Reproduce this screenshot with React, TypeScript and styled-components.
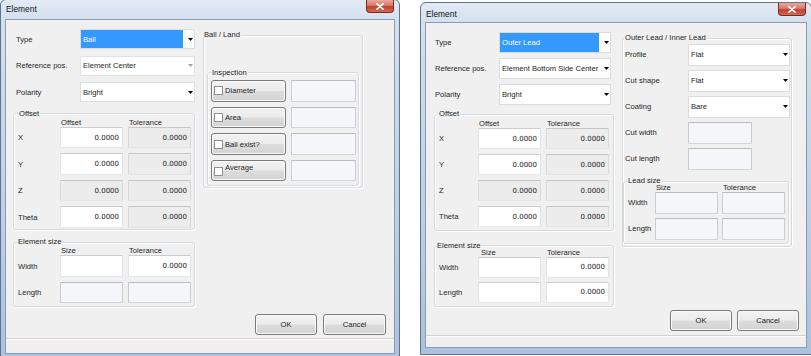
import styled, { createGlobalStyle } from "styled-components";

const GlobalStyle = createGlobalStyle`
  html, body {
    margin: 0;
    padding: 0;
    background: #ffffff;
  }
  body {
    font-family: "Liberation Sans", Arial, sans-serif;
    font-size: 7.6px;
    color: #1e1e1e;
  }
`;

const Page = styled.div`
  width: 811px;
  height: 356px;
  overflow: hidden;
  display: flex;
  align-items: flex-start;
  background: #ffffff;
`;

const Frame = styled.div<{ $left: number; $top: number; $width: number }>`
  flex: none;
  box-sizing: border-box;
  width: ${(p) => p.$width}px;
  margin-left: ${(p) => p.$left}px;
  margin-top: ${(p) => p.$top}px;
  padding: 0 4px 6px 4px;
  border: 1px solid #5f738f;
  border-radius: 6px 6px 0 0;
  background: linear-gradient(180deg, #e3ebf4 0px, #d3e0ee 19px, #bcd0e7 60%, #a9c2df 100%);
`;

const TitleBar = styled.div`
  height: 19px;
  display: flex;
  align-items: flex-start;
`;

const Title = styled.span<{ $pt: number }>`
  padding: ${(p) => p.$pt}px 0 0 1px;
  font-size: 8.4px;
  line-height: 10px;
  color: #111;
`;

const CloseButton = styled.div`
  margin-left: auto;
  margin-right: 1px;
  width: 28px;
  height: 13px;
  box-sizing: border-box;
  border: 1px solid #7c2a22;
  border-top: none;
  border-radius: 0 0 4px 4px;
  background: linear-gradient(180deg, #e9a99d 0%, #d77a6c 45%, #c4402f 55%, #d5694f 100%);
  display: flex;
  align-items: center;
  justify-content: center;
`;

const Client = styled.div<{ $height: number }>`
  box-sizing: border-box;
  height: ${(p) => p.$height}px;
  display: flex;
  flex-direction: column;
  background: #f0f0f0;
  border: 1px solid #8a9cb4;
`;

const Body = styled.div<{ $cols: string; $pad: string }>`
  display: grid;
  grid-template-columns: ${(p) => p.$cols};
  column-gap: 8px;
  align-items: start;
  padding: ${(p) => p.$pad};
`;

const Column = styled.div`
  display: flex;
  flex-direction: column;
`;

const FormGrid = styled.div<{ $label: number; $field: number; $row: number; $gap: number; $indent: number }>`
  display: grid;
  grid-template-columns: ${(p) => p.$label}px ${(p) => p.$field}px;
  grid-auto-rows: ${(p) => p.$row}px;
  row-gap: ${(p) => p.$gap}px;
  align-items: center;
  padding-left: ${(p) => p.$indent}px;
`;

const Label = styled.span`
  white-space: nowrap;
`;

const GroupBox = styled.div<{ $mt: number; $pad: string }>`
  position: relative;
  margin-top: ${(p) => p.$mt}px;
  padding: ${(p) => p.$pad};
  border: 1px solid #d5dadf;
  border-radius: 3px;
  box-shadow: inset 1px 1px 0 #ffffff, 1px 1px 0 #ffffff;
`;

const Caption = styled.span<{ $left: number }>`
  position: absolute;
  top: -4.5px;
  left: ${(p) => p.$left}px;
  padding: 0 1px;
  line-height: 7px;
  background: #f0f0f0;
  white-space: nowrap;
`;

const MatrixRow = styled.div<{ $cols: string; $gap: number; $h: number }>`
  display: grid;
  grid-template-columns: ${(p) => p.$cols};
  column-gap: ${(p) => p.$gap}px;
  align-items: center;
  height: ${(p) => p.$h}px;
`;

const HeadText = styled.span<{ $indent?: number }>`
  position: relative;
  line-height: 8px;
  padding-left: ${(p) => p.$indent ?? 1}px;
  white-space: nowrap;
`;

const RowStack = styled.div<{ $gap: number }>`
  display: flex;
  flex-direction: column;
  gap: ${(p) => p.$gap}px;
`;

type BoxKind = "edit" | "readonly" | "disabled";

const TextBox = styled.div<{ $kind: BoxKind; $w?: number }>`
  box-sizing: border-box;
  height: 100%;
  width: ${(p) => (p.$w ? `${p.$w}px` : "auto")};
  display: flex;
  align-items: center;
  justify-content: flex-end;
  padding-right: 3px;
  font-family: "DejaVu Sans", Verdana, sans-serif;
  font-size: 7px;
  color: #222;
  border: 1px solid;
  border-radius: 1px;
  ${(p) =>
    p.$kind === "edit"
      ? "background: #ffffff; border-color: #c9ccd1 #e2e3ea #e3e9ef #e2e3ea;"
      : p.$kind === "readonly"
      ? "background: #ececec; border-color: #c7c7c7 #dadada #e4e4e4 #dadada;"
      : "background: #f4f6f9; border-color: #b9bdc2 #c9ccd0 #d2d4d8 #c9ccd0;"}
`;

const Combo = styled.div<{ $disabled?: boolean }>`
  box-sizing: border-box;
  height: 100%;
  display: flex;
  align-items: stretch;
  background: #ffffff;
  border: 1px solid ${(p) => (p.$disabled ? "#e3e3e3" : "#dcdcdc")};
`;

const ComboText = styled.span<{ $selected?: boolean }>`
  flex: 1;
  display: flex;
  align-items: center;
  padding-left: 2px;
  white-space: nowrap;
  background: ${(p) => (p.$selected ? "#3399ff" : "transparent")};
  color: ${(p) => (p.$selected ? "#ffffff" : "inherit")};
`;

const ArrowBox = styled.span`
  width: 10px;
  flex: none;
  display: flex;
  align-items: center;
  justify-content: flex-end;
  padding-right: 1px;
`;

const Footer = styled.div<{ $gap: number; $pad: string }>`
  margin-top: auto;
  display: flex;
  justify-content: flex-end;
  gap: ${(p) => p.$gap}px;
  padding: ${(p) => p.$pad};
`;

const PushButton = styled.div<{ $w: number }>`
  box-sizing: border-box;
  width: ${(p) => p.$w}px;
  height: 21px;
  display: flex;
  align-items: center;
  justify-content: center;
  border: 1px solid #7a7a7a;
  border-radius: 3px;
  background: linear-gradient(180deg, #f3f3f3 0%, #ebebeb 48%, #dddddd 52%, #d2d2d2 100%);
  box-shadow: inset 0 0 0 1px #fbfbfb;
`;

const CheckButton = styled(PushButton)<{ $lift?: number }>`
  justify-content: flex-start;
  padding-left: 2px;
  gap: 2px;
  height: 100%;
  & > span {
    position: relative;
    top: ${(p) => -(p.$lift ?? 0)}px;
  }
`;

const CheckBox = styled.i<{ $drop?: number }>`
  box-sizing: border-box;
  width: 9px;
  height: 9px;
  position: relative;
  top: ${(p) => p.$drop ?? 0}px;
  background: #ffffff;
  border: 1px solid #8e9092;
`;

const InspectRow = styled.div`
  display: grid;
  grid-template-columns: 75px 65px;
  column-gap: 5px;
  height: 21.5px;
`;

const StatusStrip = styled.div<{ $h: number }>`
  box-sizing: border-box;
  height: ${(p) => p.$h}px;
  border-top: 1px solid #d2d2d2;
  box-shadow: inset 0 1px 0 #ffffff;
  background: #f0eeee;
`;

function ArrowIcon({ disabled }: { disabled?: boolean }) {
  return (
    <svg width="5" height="3" viewBox="0 0 5 3">
      <path d="M0 0H5L2.5 3Z" fill={disabled ? "#a5a5a5" : "#000000"} />
    </svg>
  );
}

function CloseIcon() {
  return (
    <svg width="8" height="7" viewBox="0 0 8 7">
      <path d="M1 0.8L7 6.2M7 0.8L1 6.2" stroke="#ffffff" strokeWidth="1.7" strokeLinecap="round" />
    </svg>
  );
}

function Select({ value, selected, disabled }: { value: string; selected?: boolean; disabled?: boolean }) {
  return (
    <Combo $disabled={disabled}>
      <ComboText $selected={selected}>{value}</ComboText>
      <ArrowBox>
        <ArrowIcon disabled={disabled} />
      </ArrowBox>
    </Combo>
  );
}

function BallDialog() {
  const cols = "37px 63px 63px";
  return (
    <Frame $left={0} $top={-1} $width={400}>
      <TitleBar>
        <Title $pt={4}>Element</Title>
        <CloseButton>
          <CloseIcon />
        </CloseButton>
      </TitleBar>
      <Client $height={335}>
        <Body $cols="182px 160px" $pad="9px 0 0 7px">
          <Column>
            <FormGrid $label={64} $field={115} $row={20} $gap={6.5} $indent={3}>
              <Label>Type</Label>
              <Select value="Ball" selected />
              <Label>Reference pos.</Label>
              <Select value="Element Center" disabled />
              <Label>Polarity</Label>
              <Select value="Bright" />
            </FormGrid>

            <GroupBox $mt={11} $pad="4px 3px 1.3px 4px">
              <Caption $left={4}>Offset</Caption>
              <MatrixRow $cols={cols} $gap={5} $h={9}>
                <span />
                <HeadText>Offset</HeadText>
                <HeadText>Tolerance</HeadText>
              </MatrixRow>
              <RowStack $gap={5.3}>
                <MatrixRow $cols={cols} $gap={5} $h={21.2}>
                  <Label>X</Label>
                  <TextBox $kind="edit">0.0000</TextBox>
                  <TextBox $kind="readonly">0.0000</TextBox>
                </MatrixRow>
                <MatrixRow $cols={cols} $gap={5} $h={21.2}>
                  <Label>Y</Label>
                  <TextBox $kind="edit">0.0000</TextBox>
                  <TextBox $kind="readonly">0.0000</TextBox>
                </MatrixRow>
                <MatrixRow $cols={cols} $gap={5} $h={21.2}>
                  <Label>Z</Label>
                  <TextBox $kind="readonly">0.0000</TextBox>
                  <TextBox $kind="readonly">0.0000</TextBox>
                </MatrixRow>
                <MatrixRow $cols={cols} $gap={5} $h={21.2}>
                  <Label>Theta</Label>
                  <TextBox $kind="edit">0.0000</TextBox>
                  <TextBox $kind="readonly">0.0000</TextBox>
                </MatrixRow>
              </RowStack>
            </GroupBox>

            <GroupBox $mt={12} $pad="3.5px 3px 2.5px 4px">
              <Caption $left={3}>Element size</Caption>
              <MatrixRow $cols={cols} $gap={5} $h={9}>
                <span />
                <HeadText>Size</HeadText>
                <HeadText>Tolerance</HeadText>
              </MatrixRow>
              <RowStack $gap={5}>
                <MatrixRow $cols={cols} $gap={5} $h={21.5}>
                  <Label>Width</Label>
                  <TextBox $kind="edit" />
                  <TextBox $kind="edit">0.0000</TextBox>
                </MatrixRow>
                <MatrixRow $cols={cols} $gap={5} $h={21.5}>
                  <Label>Length</Label>
                  <TextBox $kind="disabled" />
                  <TextBox $kind="disabled" />
                </MatrixRow>
              </RowStack>
            </GroupBox>
          </Column>

          <Column>
            <GroupBox $mt={5.5} $pad="36.5px 3px 1px 3px">
              <Caption $left={-1}>Ball / Land</Caption>
              <GroupBox $mt={0} $pad="7px 2px 3.5px 3px">
                <Caption $left={3}>Inspection</Caption>
                <RowStack $gap={5.17}>
                  <InspectRow>
                    <CheckButton $w={75}>
                      <CheckBox />
                      <span>Diameter</span>
                    </CheckButton>
                    <TextBox $kind="disabled" />
                  </InspectRow>
                  <InspectRow>
                    <CheckButton $w={75}>
                      <CheckBox />
                      <span>Area</span>
                    </CheckButton>
                    <TextBox $kind="disabled" />
                  </InspectRow>
                  <InspectRow>
                    <CheckButton $w={75}>
                      <CheckBox />
                      <span>Ball exist?</span>
                    </CheckButton>
                    <TextBox $kind="disabled" />
                  </InspectRow>
                  <InspectRow>
                    <CheckButton $w={75} $lift={3}>
                      <CheckBox $drop={1} />
                      <span>Average</span>
                    </CheckButton>
                    <TextBox $kind="disabled" />
                  </InspectRow>
                </RowStack>
              </GroupBox>
            </GroupBox>
          </Column>
        </Body>

        <Footer $gap={6} $pad="0 8px 3px 0">
          <PushButton $w={62}>OK</PushButton>
          <PushButton $w={63}>Cancel</PushButton>
        </Footer>
        <StatusStrip $h={15} />
      </Client>
    </Frame>
  );
}

function LeadDialog() {
  const cols = "34px 63px 63px";
  const leadCols = "23px 63px 63px";
  return (
    <Frame $left={20} $top={2} $width={392}>
      <TitleBar>
        <Title $pt={6}>Element</Title>
        <CloseButton>
          <CloseIcon />
        </CloseButton>
      </TitleBar>
      <Client $height={326}>
        <Body $cols="180px 170px" $pad="9px 0 0 8px">
          <Column>
            <FormGrid $label={64} $field={112} $row={21} $gap={5} $indent={1}>
              <Label>Type</Label>
              <Select value="Outer Lead" selected />
              <Label>Reference pos.</Label>
              <Select value="Element Bottom Side Center" />
              <Label>Polarity</Label>
              <Select value="Bright" />
            </FormGrid>

            <GroupBox $mt={8.5} $pad="4.5px 4px 3px 4px">
              <Caption $left={3}>Offset</Caption>
              <MatrixRow $cols={cols} $gap={5} $h={9}>
                <span />
                <HeadText>Offset</HeadText>
                <HeadText>Tolerance</HeadText>
              </MatrixRow>
              <RowStack $gap={5}>
                <MatrixRow $cols={cols} $gap={5} $h={21}>
                  <Label>X</Label>
                  <TextBox $kind="edit">0.0000</TextBox>
                  <TextBox $kind="readonly">0.0000</TextBox>
                </MatrixRow>
                <MatrixRow $cols={cols} $gap={5} $h={21}>
                  <Label>Y</Label>
                  <TextBox $kind="edit">0.0000</TextBox>
                  <TextBox $kind="readonly">0.0000</TextBox>
                </MatrixRow>
                <MatrixRow $cols={cols} $gap={5} $h={21}>
                  <Label>Z</Label>
                  <TextBox $kind="readonly">0.0000</TextBox>
                  <TextBox $kind="readonly">0.0000</TextBox>
                </MatrixRow>
                <MatrixRow $cols={cols} $gap={5} $h={21}>
                  <Label>Theta</Label>
                  <TextBox $kind="edit">0.0000</TextBox>
                  <TextBox $kind="readonly">0.0000</TextBox>
                </MatrixRow>
              </RowStack>
            </GroupBox>

            <GroupBox $mt={14} $pad="2.5px 4px 2.5px 4px">
              <Caption $left={1}>Element size</Caption>
              <MatrixRow $cols={cols} $gap={5} $h={8}>
                <span />
                <HeadText $indent={3}>Size</HeadText>
                <HeadText>Tolerance</HeadText>
              </MatrixRow>
              <RowStack $gap={3.5}>
                <MatrixRow $cols={cols} $gap={5} $h={21.5}>
                  <Label>Width</Label>
                  <TextBox $kind="edit" />
                  <TextBox $kind="edit">0.0000</TextBox>
                </MatrixRow>
                <MatrixRow $cols={cols} $gap={5} $h={21.5}>
                  <Label>Length</Label>
                  <TextBox $kind="edit" />
                  <TextBox $kind="edit">0.0000</TextBox>
                </MatrixRow>
              </RowStack>
            </GroupBox>
          </Column>

          <Column>
            <GroupBox $mt={5.5} $pad="5.5px 0 2px 0">
              <Caption $left={1}>Outer Lead / Inner Lead</Caption>
              <FormGrid $label={63} $field={102} $row={21.5} $gap={4.5} $indent={2}>
                <Label>Profile</Label>
                <Select value="Flat" />
                <Label>Cut shape</Label>
                <Select value="Flat" />
                <Label>Coating</Label>
                <Select value="Bare" />
                <Label>Cut width</Label>
                <TextBox $kind="disabled" $w={64} />
                <Label>Cut length</Label>
                <TextBox $kind="disabled" $w={64} />
              </FormGrid>

              <GroupBox $mt={11} $pad="2.5px 3px 3.5px 4px" style={{ marginRight: 2 }}>
                <Caption $left={3}>Lead size</Caption>
                <MatrixRow $cols={leadCols} $gap={4} $h={8}>
                  <span />
                  <HeadText>Size</HeadText>
                  <HeadText>Tolerance</HeadText>
                </MatrixRow>
                <RowStack $gap={4.5}>
                  <MatrixRow $cols={leadCols} $gap={4} $h={21.5}>
                    <Label>Width</Label>
                    <TextBox $kind="disabled" />
                    <TextBox $kind="disabled" />
                  </MatrixRow>
                  <MatrixRow $cols={leadCols} $gap={4} $h={21.5}>
                    <Label>Length</Label>
                    <TextBox $kind="disabled" />
                    <TextBox $kind="disabled" />
                  </MatrixRow>
                </RowStack>
              </GroupBox>
            </GroupBox>
          </Column>
        </Body>

        <Footer $gap={5} $pad="0 7px 4px 0">
          <PushButton $w={62}>OK</PushButton>
          <PushButton $w={62}>Cancel</PushButton>
        </Footer>
        <StatusStrip $h={12} />
      </Client>
    </Frame>
  );
}

export default function App() {
  return (
    <>
      <GlobalStyle />
      <Page>
        <BallDialog />
        <LeadDialog />
      </Page>
    </>
  );
}
